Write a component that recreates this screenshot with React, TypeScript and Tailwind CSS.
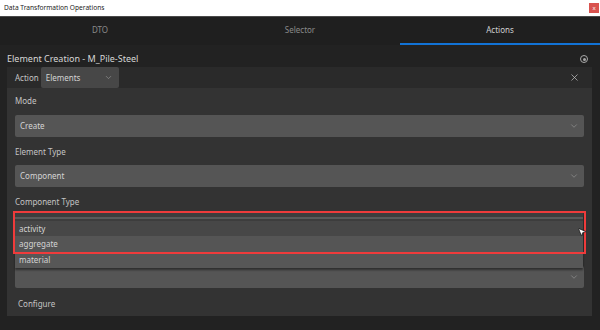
import { ChevronDown, X, MousePointer2 } from "lucide-react";

const font = { fontFamily: '"Noto Sans", "Liberation Sans", sans-serif' };

function Select({ value, className = "" }: { value?: string; className?: string }) {
	return (
		<div
			className={`flex h-[22px] items-center justify-between rounded-[2px] bg-[#555555] pl-[5px] pr-[5px] text-[8px] text-[#d4d4d4] ${className}`}
		>
			<span>{value}</span>
			<ChevronDown className="h-[10px] w-[10px] text-[#9a9a9a]" strokeWidth={1.5} />
		</div>
	);
}

function Label({ children, className = "" }: { children: React.ReactNode; className?: string }) {
	return <div className={`h-[12px] text-[8px] leading-[12px] text-[#c4c4c4] ${className}`}>{children}</div>;
}

export default function App() {
	const tabs = ["DTO", "Selector", "Actions"];

	return (
		<div className="flex h-[330px] w-[600px] flex-col overflow-hidden bg-[#222222]" style={font}>
			{/* window title */}
			<div className="flex h-[16px] items-center justify-between bg-white pl-[4px] pr-[1px]">
				<span className="text-[6.6px] text-[#1a1a1a]">Data Transformation Operations</span>
				<div className="flex h-[10px] w-[10px] items-center justify-center bg-[#d9534f] text-[6px] leading-none text-white">
					x
				</div>
			</div>
			<div className="h-[1px] bg-[#4a4a4a]" />

			{/* tabs */}
			<div className="grid h-[28px] grid-cols-3 bg-[#1f1f1f]">
				{tabs.map((tab) => (
					<div
						key={tab}
						className={`flex items-center justify-center border-b-2 text-[8px] ${
							tab === "Actions" ? "border-[#1273d6] text-[#d0d0d0]" : "border-transparent text-[#8a8a8a]"
						}`}
					>
						{tab}
					</div>
				))}
			</div>

			<div className="flex flex-1 flex-col pl-[7px] pr-[8px]">
				<div className="flex h-[22px] items-center justify-between pt-[6px]">
					<span className="text-[9px] text-[#d6d6d6]">Element Creation - M_Pile-Steel</span>
					<div className="mr-[4px] flex h-[8px] w-[8px] items-center justify-center rounded-full border border-[#a8a8a8]">
						<div className="h-[3px] w-[3px] rounded-full bg-[#a8a8a8]" />
					</div>
				</div>

				<div className="flex h-[249px] flex-col bg-[#333333]">
					{/* action header */}
					<div className="flex h-[21px] items-center bg-[#2a2a2a] pl-[8px] pr-[12px]">
						<span className="mr-[2px] text-[8px] text-[#c4c4c4]">Action</span>
						<div className="flex h-[21px] w-[78px] items-center justify-between rounded-[2px] bg-[#474747] pl-[5px] pr-[6px] text-[8px] text-[#d4d4d4]">
							<span>Elements</span>
							<ChevronDown className="h-[9px] w-[9px] text-[#a0a0a0]" strokeWidth={1.5} />
						</div>
						<X className="ml-auto h-[11px] w-[11px] text-[#c8c8c8]" strokeWidth={1.5} />
					</div>

					<div className="flex flex-col px-[8px]">
						<Label className="mt-[7px]">Mode</Label>
						<Select value="Create" className="mt-[8px]" />

						<Label className="mt-[9px]">Element Type</Label>
						<Select value="Component" className="mt-[7px]" />

						<Label className="mt-[9px]">Component Type</Label>

						<div className="relative mt-[3px] h-[77px]">
							<Select className="absolute bottom-0 left-0 right-0 h-[18px] bg-[#4f4f4f]" />

							{/* open list */}
							<div className="absolute left-0 right-[1px] top-[2px] flex flex-col text-[8px] text-[#d4d4d4] shadow-[0_2px_2px_rgba(0,0,0,0.45)]">
								<div className="h-[4px] bg-[#3d3d3d]" />
								<div className="h-[2px] bg-[#5a5a5a]" />
								<div className="h-[2px] bg-[#3d3d3d]" />
								<div className="flex h-[15px] items-center bg-[#474747] pl-[4px]">activity</div>
								<div className="flex h-[16px] items-center bg-[#555555] pl-[4px]">aggregate</div>
								<div className="flex h-[16px] items-center bg-[#575757] pl-[4px]">material</div>
							</div>

							{/* highlight box */}
							<div className="pointer-events-none absolute left-[-2px] right-[-2px] top-0 h-[43px] border-2 border-[#ef3b3b]" />
							<MousePointer2
								className="absolute right-[-3px] top-[16px] h-[10px] w-[10px] fill-white text-black"
								strokeWidth={1.5}
							/>
						</div>

						<div className="mt-[10px] pl-[3px] text-[8px] text-[#c4c4c4]">Configure</div>
					</div>
				</div>
			</div>
		</div>
	);
}
